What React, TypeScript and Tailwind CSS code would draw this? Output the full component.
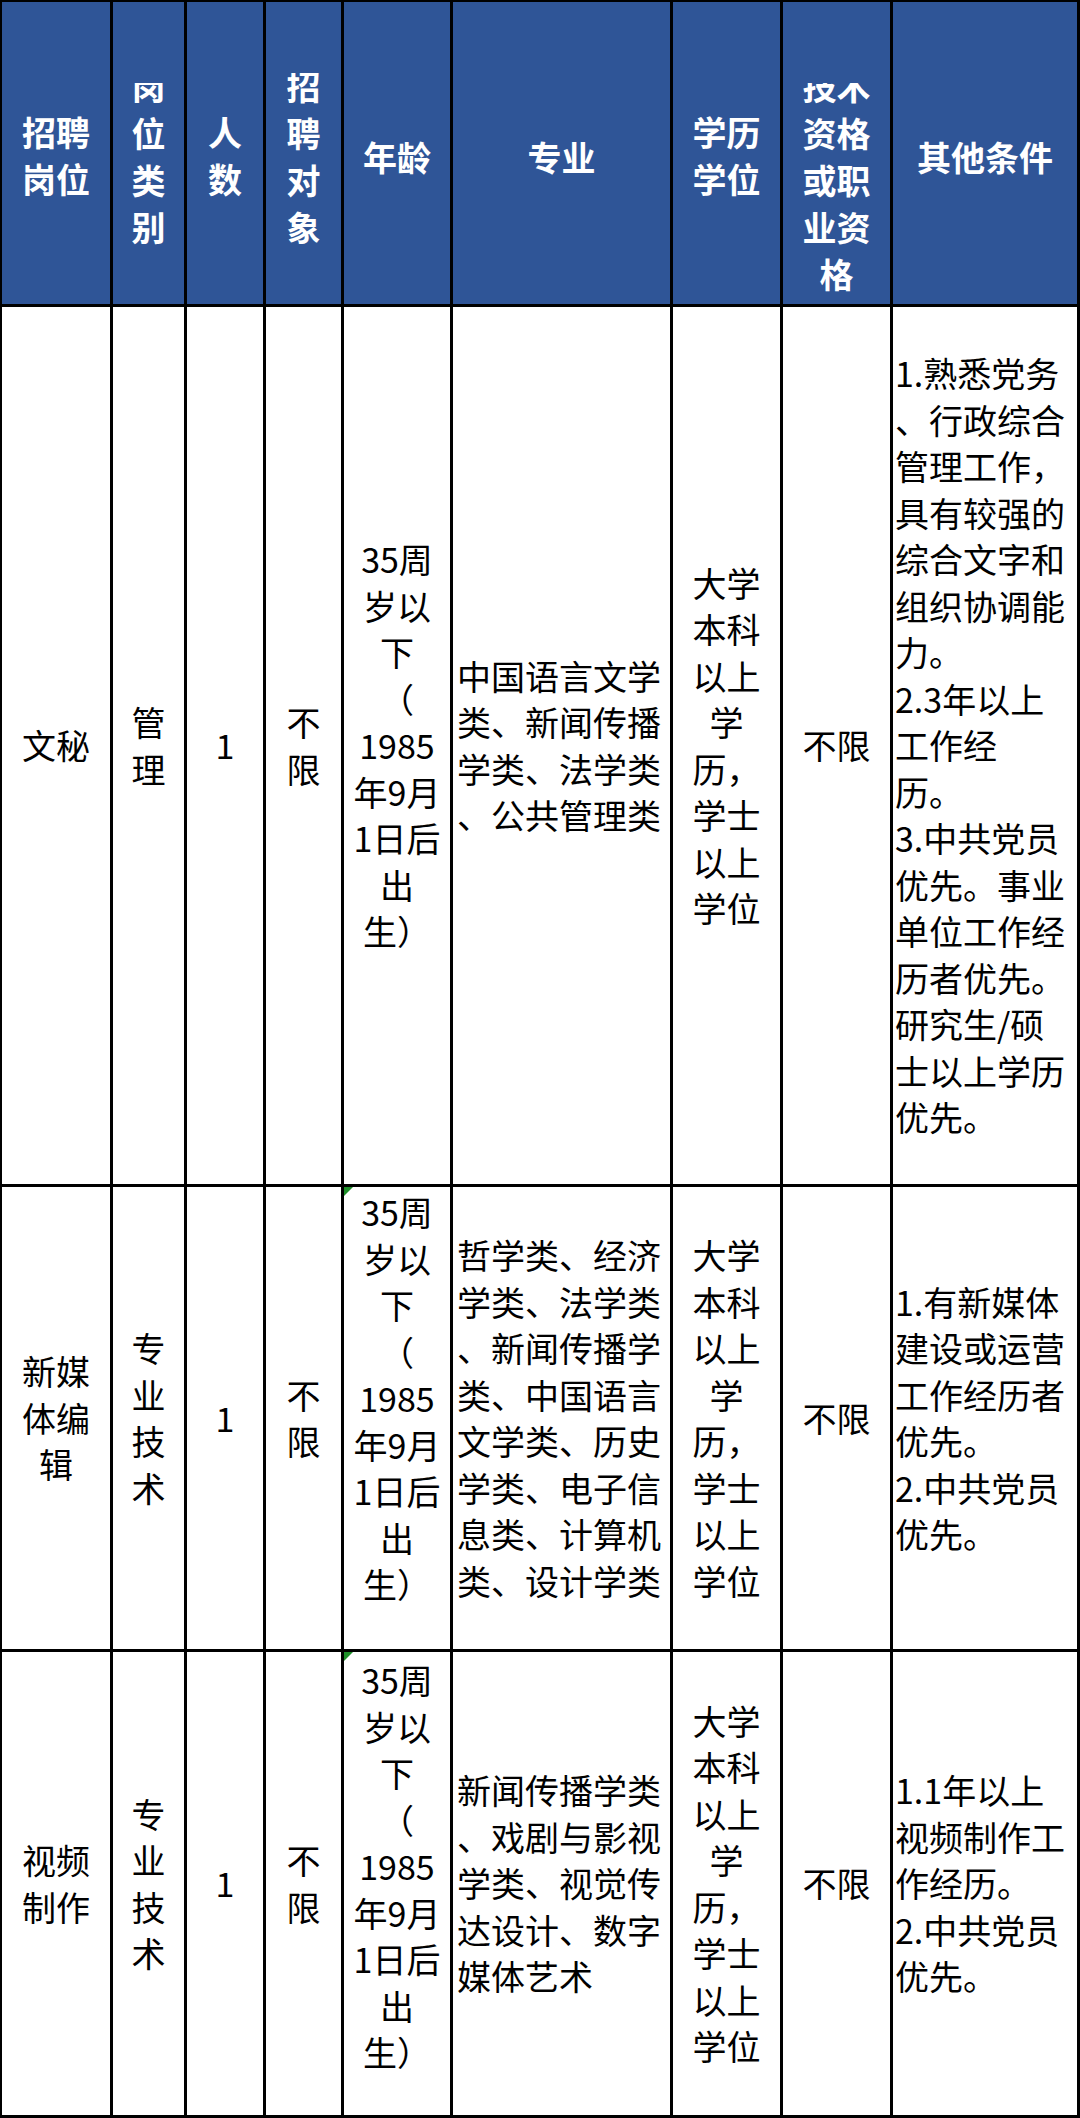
import React from "react";

const FONT = "font-['Noto_Sans_CJK_SC','Noto_Sans','Liberation_Sans',sans-serif]";

type Row = {
  post: string[];
  kind: string[];
  count: string;
  target: string[];
  agePad: string;
  flag: boolean;
  major: string[];
  degree: string[];
  cert: string;
  other: string[];
};

const AGE = ["35周", "岁以", "下", "（", "1985", "年9月", "1日后", "出", "生）"];
const DEGREE = ["大学", "本科", "以上", "学", "历，", "学士", "以上", "学位"];

const rows: Row[] = [
  {
    post: ["文秘"],
    kind: ["管", "理"],
    count: "1",
    target: ["不", "限"],
    agePad: "justify-center",
    flag: false,
    major: ["中国语言文学", "类、新闻传播", "学类、法学类", "、公共管理类"],
    degree: DEGREE,
    cert: "不限",
    other: [
      "1.熟悉党务",
      "、行政综合",
      "管理工作，",
      "具有较强的",
      "综合文字和",
      "组织协调能",
      "力。",
      "2.3年以上",
      "工作经",
      "历。",
      "3.中共党员",
      "优先。事业",
      "单位工作经",
      "历者优先。",
      "研究生/硕",
      "士以上学历",
      "优先。",
    ],
  },
  {
    post: ["新媒", "体编", "辑"],
    kind: ["专", "业", "技", "术"],
    count: "1",
    target: ["不", "限"],
    agePad: "justify-start pt-[2px]",
    flag: true,
    major: [
      "哲学类、经济",
      "学类、法学类",
      "、新闻传播学",
      "类、中国语言",
      "文学类、历史",
      "学类、电子信",
      "息类、计算机",
      "类、设计学类",
    ],
    degree: DEGREE,
    cert: "不限",
    other: ["1.有新媒体", "建设或运营", "工作经历者", "优先。", "2.中共党员", "优先。"],
  },
  {
    post: ["视频", "制作"],
    kind: ["专", "业", "技", "术"],
    count: "1",
    target: ["不", "限"],
    agePad: "justify-start pt-[5px]",
    flag: true,
    major: ["新闻传播学类", "、戏剧与影视", "学类、视觉传", "达设计、数字", "媒体艺术"],
    degree: DEGREE,
    cert: "不限",
    other: ["1.1年以上", "视频制作工", "作经历。", "2.中共党员", "优先。"],
  },
];

function Lines({ lines }: { lines: string[] }) {
  return (
    <>
      {lines.map((line, i) => (
        <div key={i} className="whitespace-nowrap">
          {line}
        </div>
      ))}
    </>
  );
}

function Head({ lines, pad }: { lines: string[]; pad: string }) {
  return (
    <div className={`flex flex-col items-center bg-[#2f5597] text-white font-bold leading-[47px] ${pad}`}>
      <Lines lines={lines} />
    </div>
  );
}

// text that runs over the top of the header cell and gets cut off
function ClippedHead({ lines, pad, shift }: { lines: string[]; pad: string; shift: string }) {
  return (
    <div className={`flex flex-col items-center bg-[#2f5597] text-white font-bold leading-[47px] ${pad}`}>
      <div className="overflow-hidden">
        <div className={`flex flex-col items-center ${shift}`}>
          <Lines lines={lines} />
        </div>
      </div>
    </div>
  );
}

function Center({ lines }: { lines: string[] }) {
  return (
    <div className="flex flex-col items-center justify-center bg-white text-center">
      <Lines lines={lines} />
    </div>
  );
}

function Left({ lines, pad }: { lines: string[]; pad: string }) {
  return (
    <div className={`flex flex-col items-start justify-center bg-white ${pad}`}>
      <Lines lines={lines} />
    </div>
  );
}

function AgeCell({ pad, flag }: { pad: string; flag: boolean }) {
  return (
    <div className={`relative flex flex-col items-center bg-white ${pad}`}>
      {flag && (
        <svg className="absolute left-0 top-0" width="9" height="9" viewBox="0 0 9 9" aria-hidden="true">
          <polygon points="0,0 9,0 0,9" fill="#1f8f2a" />
        </svg>
      )}
      <Lines lines={AGE} />
    </div>
  );
}

export default function App() {
  return (
    <div className={`w-[1080px] bg-white ${FONT}`}>
      <div className="grid grid-cols-[108px_71px_76px_75px_106px_217px_107px_107px_184px] grid-rows-[302px_877px_462px_463px] gap-[3px] bg-black pb-[3px] pl-[2px] pr-[3px] pt-[2px] text-[34px] leading-[46.5px] text-black">
        <Head lines={["招聘", "岗位"]} pad="pt-[106px]" />
        <ClippedHead lines={["岗", "位", "类", "别"]} pad="pt-[81px]" shift="-mt-[21px]" />
        <Head lines={["人", "数"]} pad="pt-[106px]" />
        <ClippedHead lines={["招", "聘", "对", "象"]} pad="pt-[71px]" shift="-mt-[11px]" />
        <Head lines={["年龄"]} pad="pt-[131px]" />
        <Head lines={["专业"]} pad="pt-[131px]" />
        <Head lines={["学历", "学位"]} pad="pt-[106px]" />
        <ClippedHead lines={["技术", "资格", "或职", "业资", "格"]} pad="pt-[81px]" shift="-mt-[21px]" />
        <Head lines={["其他条件"]} pad="pt-[131px]" />

        {rows.map((row, i) => (
          <React.Fragment key={i}>
            <Center lines={row.post} />
            <Center lines={row.kind} />
            <Center lines={[row.count]} />
            <Center lines={row.target} />
            <AgeCell pad={row.agePad} flag={row.flag} />
            <Left lines={row.major} pad="pl-[4px]" />
            <Center lines={row.degree} />
            <Center lines={[row.cert]} />
            <Left lines={row.other} pad="pl-[2px]" />
          </React.Fragment>
        ))}
      </div>
    </div>
  );
}
